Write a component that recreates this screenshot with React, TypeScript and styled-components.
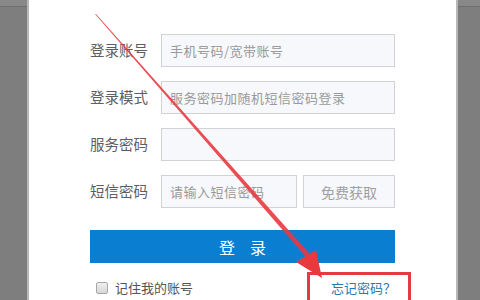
import styled, { createGlobalStyle } from "styled-components";

const GlobalStyle = createGlobalStyle`
  body {
    margin: 0;
    font-family: "Noto Sans CJK SC", "Noto Sans", sans-serif;
    overflow: hidden;
  }
`;

const Page = styled.div`
  position: relative;
  display: flex;
  width: 480px;
  height: 300px;
  overflow: hidden;
`;

const Side = styled.div<{ $width: number; $edge: "left" | "right" }>`
  width: ${(p) => p.$width}px;
  flex-shrink: 0;
  background: #7e7e7e;
  ${(p) =>
    p.$edge === "left"
      ? "border-right: 2px solid #b8b8b8;"
      : "border-left: 2px solid #b8b8b8;"}
  box-shadow: inset 0 6px 0 #888, inset 0 7px 0 #6f6f6f;
`;

const Panel = styled.div`
  flex: 1;
  background: #fff;
  padding: 34px 0 0 61px;
  display: flex;
  flex-direction: column;
`;

const Row = styled.div`
  display: flex;
  align-items: center;
  height: 33px;
  margin-bottom: 14px;
`;

const Label = styled.div`
  width: 71px;
  font-size: 14.5px;
  color: #5e5e5e;
  white-space: nowrap;
  margin-top: -3px;
`;

const Field = styled.div<{ $width: number }>`
  box-sizing: border-box;
  width: ${(p) => p.$width}px;
  height: 33px;
  border: 1px solid #d2d2d2;
  background: #f6f8fb;
  padding-left: 8px;
  display: flex;
  align-items: center;
  font-size: 13px;
  color: #9a9a9a;
  letter-spacing: 0.5px;
  white-space: nowrap;
`;

const SmsButton = styled.div`
  box-sizing: border-box;
  width: 92px;
  height: 33px;
  margin-left: 6px;
  border: 1px solid #d2d2d2;
  background: #f6f8fb;
  display: flex;
  align-items: center;
  justify-content: center;
  font-size: 14px;
  color: #a0a0a0;
`;

const LoginButton = styled.div`
  width: 305px;
  height: 33px;
  margin-top: 8px;
  background: #0a7fd1;
  color: #fff;
  font-size: 16px;
  letter-spacing: 15px;
  text-indent: 15px;
  display: flex;
  align-items: center;
  justify-content: center;
`;

const Bottom = styled.div`
  width: 305px;
  display: flex;
  align-items: center;
  justify-content: space-between;
  margin-top: 15px;
`;

const Remember = styled.label`
  display: flex;
  align-items: center;
  gap: 7px;
  padding-left: 6px;
  font-size: 13px;
  color: #555;
`;

const Box = styled.span`
  width: 10px;
  height: 10px;
  border: 1px solid #a8a8a8;
  border-radius: 2px;
  background: linear-gradient(#eee, #d8d8d8);
`;

const Forgot = styled.span`
  font-size: 13px;
  color: #2a78ae;
  margin-right: -1px;
`;

const Highlight = styled.div`
  position: absolute;
  left: 307px;
  top: 272px;
  width: 98px;
  height: 40px;
  border: 3px solid #e8393f;
`;

const Arrow = styled.svg`
  position: absolute;
  left: 0;
  top: 0;
  pointer-events: none;
`;

export default function App() {
  return (
    <>
      <GlobalStyle />
      <Page>
        <Side $width={27} $edge="left" />
        <Panel>
          <Row>
            <Label>登录账号</Label>
            <Field $width={234}>手机号码/宽带账号</Field>
          </Row>
          <Row>
            <Label>登录模式</Label>
            <Field $width={234}>服务密码加随机短信密码登录</Field>
          </Row>
          <Row>
            <Label>服务密码</Label>
            <Field $width={234} />
          </Row>
          <Row>
            <Label>短信密码</Label>
            <Field $width={136}>请输入短信密码</Field>
            <SmsButton>免费获取</SmsButton>
          </Row>
          <LoginButton>登录</LoginButton>
          <Bottom>
            <Remember>
              <Box />
              记住我的账号
            </Remember>
            <Forgot>忘记密码？</Forgot>
          </Bottom>
        </Panel>
        <Side $width={22} $edge="right" />
        <Highlight />
        <Arrow width="480" height="300" viewBox="0 0 480 300">
          <polygon
            points="95,14 96,14 317,262 313,265"
            fill="#e8393f"
            opacity="0.9"
          />
          <polygon points="322,278 296,262 316,250" fill="#e8393f" />
        </Arrow>
      </Page>
    </>
  );
}
